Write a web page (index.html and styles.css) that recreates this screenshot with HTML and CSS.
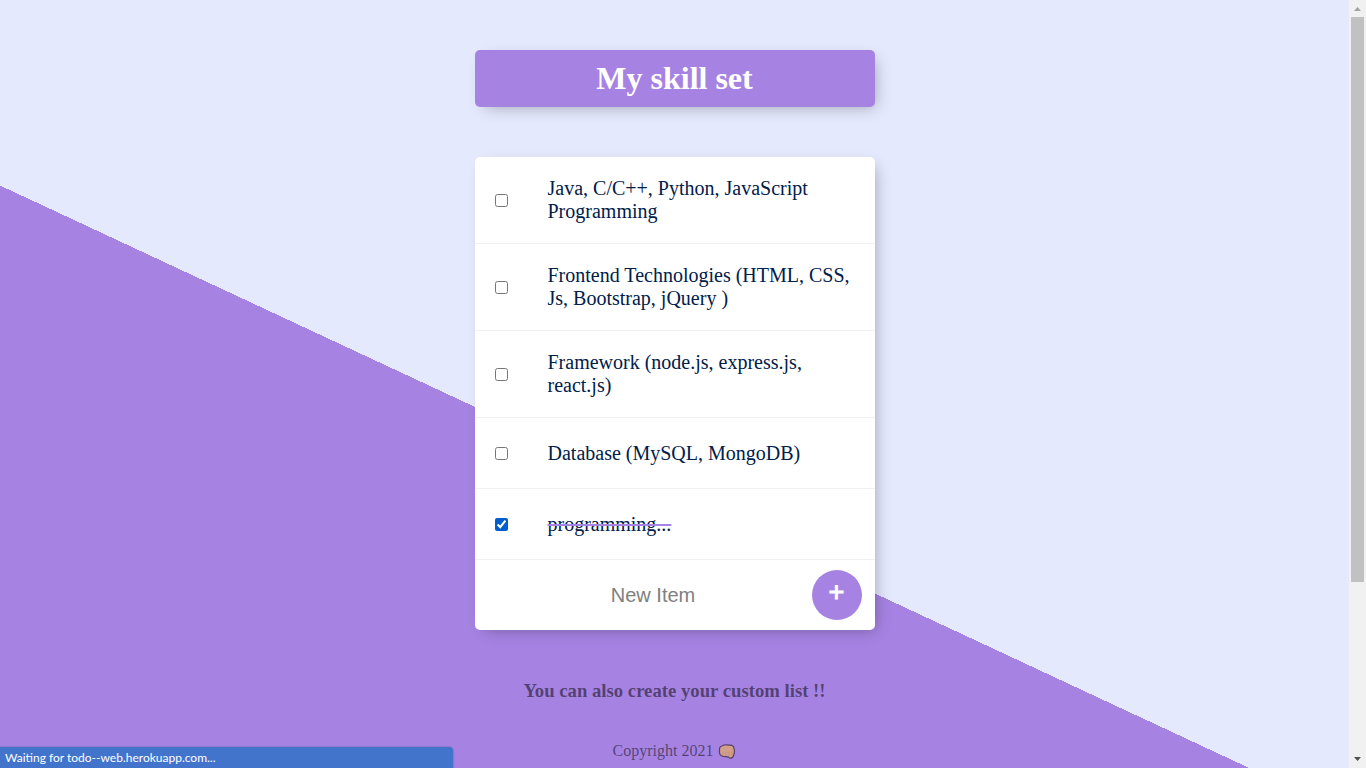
FILE: index.html
```html
<!DOCTYPE html>
<html lang="en">
<head>
<meta charset="utf-8">
<title>My skill set</title>
<link rel="stylesheet" href="styles.css">
</head>
<body>
<div class="window">
  <div class="page">
    <header class="box heading"><h1>My skill set</h1></header>
    <main class="box">
      <div class="item"><input type="checkbox" id="s1"><label for="s1">Java, C/C++, Python, JavaScript Programming</label></div>
      <div class="item"><input type="checkbox" id="s2"><label for="s2">Frontend Technologies (HTML, CSS, Js, Bootstrap, jQuery )</label></div>
      <div class="item"><input type="checkbox" id="s3"><label for="s3">Framework (node.js, express.js, react.js)</label></div>
      <div class="item"><input type="checkbox" id="s4"><label for="s4">Database (MySQL, MongoDB)</label></div>
      <div class="item"><input type="checkbox" id="s5" checked><label for="s5">programming...</label></div>
      <form class="new-item">
        <input type="text" class="new-text" placeholder="New Item" aria-label="New Item" autocomplete="off">
        <button type="button" class="add" aria-label="Add item">+</button>
      </form>
    </main>
    <footer class="footer">
      <h3>You can also create your custom list !!</h3>
      <p class="copyright">Copyright 2021
        <svg class="fist" viewBox="0 0 18 16" aria-hidden="true">
          <path d="M1.500 6Q1.500 3.500 4 3L6 2Q10 1.500 14 2.300Q16 3.500 16.300 6.500Q16.800 10 15.500 12.500Q14.500 15.800 11.500 15L10 13.800L5 13.300Q2 12.800 1.500 10Z" fill="#d2a08a" stroke="#58406c" stroke-width="1.200"/>
          <path d="M5 9v3M8 9v3.500M11 9v4M13.800 8v4" fill="none" stroke="#b38678" stroke-width=".6"/>
        </svg>
      </p>
    </footer>
  </div>
  <div class="scrollbar" aria-hidden="true">
    <svg class="arrow" viewBox="0 0 17 17"><path d="M5 11h7L8.500 7z" fill="#a3a3a3"/></svg>
    <div class="track"><div class="thumb"></div></div>
    <svg class="arrow" viewBox="0 0 17 17"><path d="M5 6h7L8.500 10z" fill="#505050"/></svg>
  </div>
  <div class="status">Waiting for todo--web.herokuapp.com...</div>
</div>
</body>
</html>
```
FILE: styles.css
```css
* { box-sizing: border-box; }
body {
  margin: 0;
  font-family: "Liberation Serif", "Times New Roman", serif;
}
.window {
  position: relative;
  display: flex;
  height: 100vh;
  overflow: hidden;
}
.page {
  flex: 1;
  overflow: hidden;
  background: #e4e9fd linear-gradient(25deg, #a683e3 50%, #e4e9fd 50%) no-repeat 0 0 / 100% 1000px;
}
.box {
  max-width: 400px;
  margin: 50px auto;
  background: #fff;
  border-radius: 5px;
  box-shadow: 5px 5px 15px -5px rgba(0, 0, 0, 0.3);
}
.heading {
  padding: 10px;
  background: #a683e3;
  text-align: center;
}
h1 {
  margin: 0;
  color: #fff;
  font-size: 32px;
  line-height: 37px;
}
.item {
  display: flex;
  align-items: center;
  min-height: 71px;
  border-bottom: 1px solid #f1f1f1;
}
.item input {
  flex: none;
  width: 13px;
  height: 13px;
  margin: 20px;
  accent-color: #005fcc;
}
.item label {
  padding: 20px;
  color: #00204a;
  font-size: 20px;
  line-height: 23px;
}
.item input:checked + label {
  text-decoration: line-through 2px #a683e3;
}
.new-item {
  display: flex;
  align-items: center;
  min-height: 70px;
  padding: 0 13px 0 20px;
}
.new-text {
  flex: 1;
  min-width: 0;
  height: 60px;
  border: 0;
  outline: none;
  background: transparent;
  font: 20px "Liberation Sans", Arial, sans-serif;
  text-align: center;
}
.new-text::placeholder { color: #808080; }
.add {
  width: 50px;
  height: 50px;
  padding: 0 0 6px;
  border: 0;
  border-radius: 50%;
  background: #a683e3;
  color: #fff;
  font: 27px "Liberation Sans", Arial, sans-serif;
  -webkit-text-stroke: 1px #fff;
}
.footer {
  color: rgba(0, 0, 0, 0.5);
  text-align: center;
}
.footer h3 {
  margin: 0 0 38px;
  line-height: 22px;
}
.copyright {
  display: flex;
  align-items: center;
  justify-content: center;
  gap: 5px;
  margin: 0;
  font-size: 16px;
  line-height: 22px;
}
.fist { width: 18px; height: 16px; }
.scrollbar {
  display: flex;
  flex-direction: column;
  width: 17px;
  background: #f1f1f1;
}
.arrow { width: 17px; height: 17px; }
.track { flex: 1; padding: 0 2px; }
.thumb { height: 77%; background: #c1c1c1; }
.status {
  position: absolute;
  left: 0;
  bottom: 0;
  width: 453px;
  height: 21px;
  padding-left: 5px;
  border-radius: 0 4px 0 0;
  background: #4374cb;
  box-shadow: 0 0 1px 1px rgba(90, 90, 150, 0.3);
  color: #fff;
  font: 12px/22px Lato, "Noto Sans", sans-serif;
}
```
